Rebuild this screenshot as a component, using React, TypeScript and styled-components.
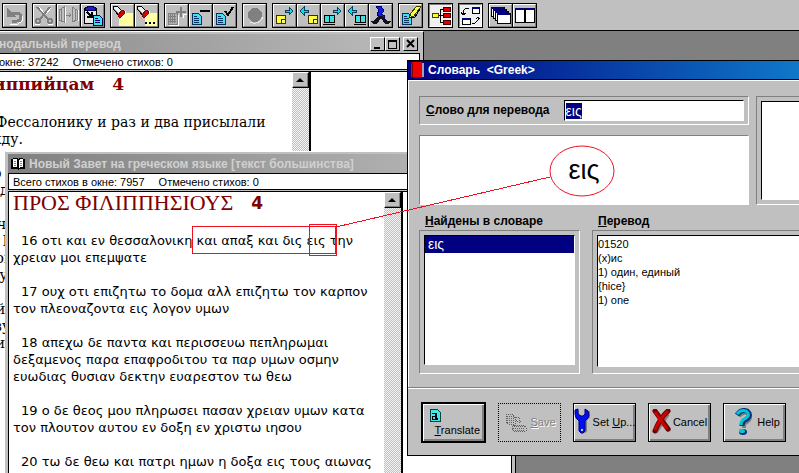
import React, { useEffect, useRef } from "react";
import styled, { createGlobalStyle, css } from "styled-components";

const sans = '"Liberation Sans", Arial, sans-serif';
const greekSans = '"DejaVu Sans", sans-serif';
const greekSerif = '"Liberation Serif", "Times New Roman", serif';
const slab = '"DejaVu Serif", serif';
const face = "#c0c0c0";
const shade = "#808080";

const GlobalStyle = createGlobalStyle`
  *, *::before, *::after { box-sizing: border-box; }
  body { margin: 0; background: ${shade}; font: 12px ${sans}; color: #000; }
  button, input, select, textarea { font: inherit; color: inherit; border-radius: 0; }
`;

const sunken = css`
  border: 1px solid;
  border-color: ${shade} #fff #fff ${shade};
`;

const Screen = styled.div`
  display: flex;
  flex-direction: column;
  height: 100vh;
  overflow: hidden;
  position: relative;
`;

const Toolbar = styled.div`
  display: flex;
  flex: none;
  gap: 5px;
  padding: 3px 2px 2px;
  background: ${face};
  border-bottom: 1px solid #000;
`;
const ToolGroup = styled.div`
  display: flex;
  border: 1px solid #000;
  gap: 1px;
  background: #000;
`;
const ToolButton = styled.button<{ $on?: boolean }>`
  display: block;
  width: 23px;
  height: 23px;
  padding: 0;
  border: 1px solid;
  border-color: ${(p) => (p.$on ? `${shade} #fff #fff ${shade}` : `#fff ${shade} ${shade} #fff`)};
  background: ${(p) => (p.$on ? "#f0f0f0" : face)};
  svg { display: block; }
`;

const Workspace = styled.main`
  flex: 1;
  position: relative;
  overflow: hidden;
`;

const BibleWindow = styled.section<{ $left: number; $top: number; $width: number }>`
  position: absolute;
  left: ${(p) => p.$left}px;
  top: ${(p) => p.$top}px;
  bottom: -40px;
  width: ${(p) => p.$width}px;
  display: flex;
  flex-direction: column;
  padding: 2px 3px 0 2px;
  background: ${face};
  border: 1px solid;
  border-color: #fff #000 #000 ${face};
`;
const TitleBar = styled.header<{ $inset?: number }>`
  display: flex;
  align-items: center;
  flex: none;
  height: 19px;
  gap: 3px;
  padding: 0 2px 0 ${(p) => p.$inset ?? 2}px;
  color: #d0d0d0;
  background: linear-gradient(90deg, #808080, #bcbcbc);
  h2 {
    flex: 1;
    margin: 0;
    font: bold 12px ${sans};
    white-space: nowrap;
  }
`;
const CaptionButtons = styled.div`
  display: flex;
  button:last-child { margin-left: 3px; }
`;
const CaptionButton = styled.button`
  width: 15px;
  height: 14px;
  padding: 0;
  background: ${face};
  border: 1px solid;
  border-color: #fff #000 #000 #fff;
  svg { display: block; }
`;
const Status = styled.div<{ $inset?: number }>`
  display: flex;
  align-items: center;
  flex: none;
  gap: 14px;
  height: 17px;
  padding-left: ${(p) => p.$inset ?? 4}px;
  margin-bottom: 1px;
  background: #fff;
  border: 1px solid #000;
  font-size: 11px;
  white-space: nowrap;
`;
const Panes = styled.div`
  display: flex;
  flex: 1;
  min-height: 0;
  border: solid #000;
  border-width: 1px 1px 0;
  background: #000;
  gap: 1px;
`;
const TextPane = styled.article<{ $width: number }>`
  flex: none;
  display: flex;
  width: ${(p) => p.$width}px;
  background: #fff;
  border-right: 1px solid #000;
  overflow: hidden;
`;
const SidePane = styled.div`
  flex: 1;
  margin-left: 1px;
  background: #fff;
  box-shadow: -1px 0 #fff;
`;
const ScrollTrack = styled.div`
  flex: none;
  width: 17px;
  background: repeating-conic-gradient(#c0c0c0 0 25%, #f4f4f4 0 50%) 0 0 / 2px 2px;
`;
const ScrollButton = styled.button`
  display: block;
  width: 17px;
  height: 16px;
  padding: 0;
  background: ${face};
  border: 1px solid;
  border-color: #fff #000 #000 #fff;
  box-shadow: inset -1px -1px ${shade};
  svg { display: block; }
`;
const Verses = styled.div<{ $font: string; $size: number; $inset: number }>`
  flex: 1;
  min-width: 0;
  padding-left: ${(p) => p.$inset}px;
  font: ${(p) => p.$size}px/17px ${(p) => p.$font};
  white-space: nowrap;
  p { margin: 0 0 17px; text-indent: 8px; }
`;
const BookHeading = styled.h3<{ $size: number; $height: number; $font: string; $indent?: number; $bold?: boolean }>`
  display: flex;
  gap: 18px;
  margin: 0 0 18px;
  padding-left: ${(p) => p.$indent ?? 0}px;
  color: #800000;
  font: ${(p) => (p.$bold ? "bold" : "normal")} ${(p) => p.$size}px/${(p) => p.$height}px ${(p) => p.$font};
`;
const Chapter = styled.span`
  font-family: "DejaVu Sans", sans-serif;
  font-size: 17px;
  font-weight: bold;
`;

const Dialog = styled.form`
  position: absolute;
  left: 407px;
  right: -40px;
  top: 29px;
  display: flex;
  flex-direction: column;
  background: ${face};
  border: 1px solid #000;
`;
const DialogTitle = styled.header`
  display: flex;
  align-items: center;
  gap: 4px;
  height: 19px;
  padding-left: 3px;
  color: #fff;
  background: linear-gradient(90deg, #000080, #1084d0);
  border-bottom: 1px solid #000;
  h2 { margin: 0; font: bold 12px ${sans}; white-space: pre; }
`;
const DialogBody = styled.div`
  display: flex;
  flex-direction: column;
  padding: 15px 11px 14px 10px;
  border: solid #fff;
  border-width: 1px 0 0 1px;
`;
const Upper = styled.div`
  display: flex;
  gap: 7px;
`;
const Lookup = styled.div`
  flex: none;
  width: 330px;
  display: flex;
  flex-direction: column;
  gap: 10px;
`;
const WordBox = styled.div`
  ${sunken}
  display: flex;
  align-items: center;
  gap: 14px;
  height: 29px;
  padding: 0 4px 0 6px;
`;
const FieldLabel = styled.label`
  font: bold 12px/17px ${sans};
  white-space: nowrap;
  &::first-letter { text-decoration: underline; }
`;
const field = css`
  background: #fff;
  border: 1px solid;
  border-color: #000 #fff #fff #000;
  outline: none;
`;
const WordInput = styled.input`
  ${field}
  flex: 1;
  min-width: 0;
  height: 21px;
  padding: 0 1px;
  font: 14px ${sans};
  &::selection { background: #000080; color: #fff; }
`;
const Preview = styled.output`
  ${sunken}
  display: flex;
  align-items: center;
  justify-content: center;
  height: 70px;
  background: #fff;
  font: 27px/40px ${sans};
`;
const Well = styled.div`
  ${sunken}
  display: flex;
  flex: 1;
  min-width: 0;
  padding: 4px;
`;
const Notes = styled.textarea`
  ${field}
  display: block;
  flex: 1;
  min-width: 0;
  padding: 1px 0;
  resize: none;
  overflow: hidden;
  font: 11px/14px ${sans};
`;
const Results = styled.div`
  display: flex;
  gap: 12px;
  margin-top: 8px;
`;
const ResultColumn = styled.div<{ $width?: number }>`
  flex: ${(p) => (p.$width ? "none" : 1)};
  width: ${(p) => (p.$width ? `${p.$width}px` : "auto")};
  display: flex;
  flex-direction: column;
  label { padding-left: 6px; }
`;
const ResultWell = styled(Well)<{ $foot: number }>`
  flex: none;
  height: 144px;
  padding-bottom: ${(p) => p.$foot}px;
`;
const WordList = styled.select`
  ${field}
  flex: 1;
  min-width: 0;
  padding: 0;
  overflow: hidden;
  font: 14px/17px ${sans};
  option { min-height: 17px; padding: 0 3px; color: #000; }
  option:checked { color: #fff; background: linear-gradient(#000080, #000080); }
`;
const Actions = styled.footer`
  display: flex;
  align-items: center;
  gap: 12px;
  height: 67px;
  padding: 0 13px;
  border-top: 1px solid #fff;
  box-shadow: 0 -1px ${shade};
`;
const ActionButton = styled.button<{ $primary?: boolean; $stacked?: boolean }>`
  display: flex;
  flex: none;
  flex-direction: ${(p) => (p.$stacked ? "column" : "row")};
  align-items: ${(p) => (p.$stacked ? "flex-start" : "center")};
  justify-content: center;
  gap: 2px;
  width: ${(p) => (p.$primary ? 65 : 63)}px;
  height: ${(p) => (p.$primary ? 41 : 39)}px;
  padding: 0 4px;
  background: ${face};
  border: ${(p) => (p.$primary ? 2 : 1)}px solid #000;
  box-shadow: inset 1px 1px #fff, inset -2px -2px ${shade};
  font-size: 11px;
  white-space: nowrap;
  svg { flex: none; display: block; }
  &:disabled {
    color: ${shade};
    border: 1px dotted #000;
    box-shadow: none;
    text-shadow: 1px 1px #fff;
  }
`;
const ActionText = styled.span<{ $push?: boolean }>`
  align-self: ${(p) => (p.$push ? "flex-end" : "center")};
`;
const Annotation = styled.svg`
  position: absolute;
  left: 0;
  top: 0;
  pointer-events: none;
`;

/* ---- toolbar drawings, 21x21 ---- */
const Page = ({ x, y, fill = "#40e0f0" }: { x: number; y: number; fill?: string }) => (
  <g>
    <path d={`M${x} ${y}h6l3 3v8h-9z`} fill={fill} stroke="#003060" />
    <path d={`M${x + 2} ${y + 3}h3M${x + 2} ${y + 5}h5M${x + 2} ${y + 7}h5M${x + 2} ${y + 9}h5`} stroke="#003060" />
  </g>
);
const Arrow = ({ x, y, flip }: { x: number; y: number; flip?: boolean }) => (
  <path
    d={flip ? `M${x} ${y + 3}l4-4v3h4v2h-4v3z` : `M${x + 8} ${y + 3}l-4-4v3h-4v2h4v3z`}
    fill="#00e0e8"
    stroke="#004060"
  />
);
const Note = ({ x, y }: { x: number; y: number }) => (
  <g>
    <path d={`M${x} ${y}h9v8h-9z`} fill="#ffff40" stroke="#403000" />
    <path d={`M${x + 5} ${y + 8}v-4h4`} fill="#fff" stroke="#403000" />
  </g>
);
const Book = ({ x, y }: { x: number; y: number }) => (
  <g>
    <path d={`M${x} ${y}h4l1 1 1-1h4v7h-4l-1 1-1-1h-4z`} fill="#40e0e0" stroke="#000" />
    <path d={`M${x + 5} ${y + 1}v7M${x - 1} ${y + 9}h12`} stroke="#000" />
  </g>
);
const Torch = () => (
  <g>
    <path d="M1 1h4l6 6-4 4-6-8z" fill="#f0f0f0" stroke="#000" />
    <path d="M2 4l6 6" stroke="#808080" />
    <path d="M6 10l4-5 2 1v3l-3 3h-2z" fill="#e00000" stroke="#800000" />
    <path d="M13 6v4l-4 3" stroke="#fff" fill="none" />
  </g>
);
const Card = ({ x, y, w, h }: { x: number; y: number; w: number; h: number }) => (
  <g>
    <path d={`M${x} ${y}h${w}v${h}h-${w}z`} fill="#fff" stroke="#000" />
    <path d={`M${x} ${y + 1}h${w}`} stroke="#000080" strokeWidth="2" />
  </g>
);

const icons: Record<string, React.ReactNode> = {
  undo: (
    <g fill="none">
      <path d="M6 19h8l4-3v-5" stroke="#fff" />
      <path d="M6 8h7q4 0 4 4t-4 4h-5" stroke="#808080" strokeWidth="3" />
      <path d="M3 3v9h9z" fill="#808080" />
    </g>
  ),
  cut: (
    <g fill="none" stroke="#808080" strokeWidth="2">
      <path d="M3 2l11 12M16 2L6 14" />
      <circle cx="4" cy="16" r="2" />
      <circle cx="16" cy="16" r="2" />
      <path d="M5 2l5 6M17 3l-5 6M1 19h5M14 19h5" stroke="#fff" strokeWidth="1" />
    </g>
  ),
  mirror: (
    <g stroke="#808080" fill="none">
      <path d="M1 5l5-3v15l-5-2zM19 5l-5-3v15l5-2zM3 4v12M17 4v12" />
      <path d="M7 10h6M11 8l2 2-2 2" />
      <path d="M7 2v16M20 5v11" stroke="#fff" />
    </g>
  ),
  paste: (
    <g>
      <path d="M2 3h12v15H2z" fill="#e8e8e8" stroke="#000" />
      <path d="M5 1h6v1h2v3H3V2h2z" fill="#2020b0" stroke="#000060" />
      <path d="M5 7l4 4M10 7v5H5" stroke="#000" strokeWidth="2" fill="none" />
      <path d="M11 10h6l3 3v7h-9z" fill="#40e0f0" stroke="#000060" />
      <path d="M13 13h3M13 15h5M13 17h5" stroke="#000060" />
    </g>
  ),
  torch: (
    <g>
      <path d="M11 8h10v13H7v-6z" fill="#ffffa0" />
      <Torch />
    </g>
  ),
  torchMore: (
    <g>
      <path d="M12 8h9v13H9v-8z" fill="#ffffa0" />
      <Torch />
      <path d="M9 17h2v2H9zM13 17h2v2h-2zM17 17h2v2h-2z" />
    </g>
  ),
  add: (
    <g>
      <path d="M2 8h9v11H2z" fill="#b0b0b0" stroke="#808080" />
      <path d="M4 9v9M6 9v9M8 9v9M3 11h7M3 14h7M3 16h7" stroke="#808080" />
      <path d="M15 2v10M10 7h10" stroke="#808080" strokeWidth="2" />
      <path d="M12 10v10H3M17 9v4M17 9h4" stroke="#fff" fill="none" />
    </g>
  ),
  remove: (
    <g>
      <Page x={2} y={8} />
      <path d="M10 6h10" stroke="#000" strokeWidth="2" />
    </g>
  ),
  check: (
    <g>
      <Page x={2} y={8} />
      <path d="M11 6l3 4 5-8" stroke="#000" strokeWidth="2" fill="none" />
    </g>
  ),
  record: (
    <g>
      <circle cx="11" cy="10" r="7" fill="#808080" />
      <path d="M6 17q8 4 13-5" fill="none" stroke="#e8e8e8" />
    </g>
  ),
  noteNext: (<g><Arrow x={11} y={3} /><Note x={2} y={10} /></g>),
  notePrev: (<g><Arrow x={2} y={3} flip /><Note x={10} y={10} /></g>),
  bookNext: (<g><Arrow x={11} y={3} /><Book x={2} y={10} /></g>),
  bookPrev: (<g><Arrow x={2} y={3} flip /><Book x={9} y={10} /></g>),
  runner: (
    <g>
      <path d="M6 1h5l3 5-3 3 4 2-2 3-4-2-2-3 2-3z" fill="#1020e0" stroke="#000080" />
      <path d="M8 11l-5 5H1l2 3h4l4-6 4 6h4l2-3-4 0-4-5z" fill="#101020" />
    </g>
  ),
  edit: (
    <g>
      <Page x={2} y={8} />
      <path d="M17 1h3v2l-6 8-5 2 2-5z" fill="#ffff40" stroke="#404000" />
      <path d="M9 13l6-1 5-8" stroke="#000" fill="none" />
    </g>
  ),
  tree: (
    <g>
      <path d="M9 10h4M10 4v13M10 4h3M10 17h3" stroke="#000" fill="none" />
      <path d="M2 8h6v4H2z" fill="#ffff20" stroke="#404000" />
      <path d="M13 2h7v4h-7zM13 8h7v4h-7zM13 15h7v4h-7z" fill="#e00000" stroke="#400000" />
    </g>
  ),
  swap: (
    <g>
      <Card x={12} y={2} w={7} h={6} />
      <Card x={2} y={13} w={8} h={6} />
      <path d="M9 3H6L3 6v3M1 7l2 3 3-2M12 18h3l3-3v-2M16 14l2-2 2 2" stroke="#000" fill="none" />
    </g>
  ),
  cascade: (
    <g>
      <Card x={1} y={2} w={13} h={9} />
      <Card x={3} y={4} w={13} h={9} />
      <Card x={5} y={6} w={13} h={9} />
      <Card x={7} y={8} w={13} h={10} />
    </g>
  ),
  tile: (<g><Card x={1} y={3} w={9} h={14} /><Card x={11} y={3} w={9} h={14} /></g>),
};

const groups: { id: string; label: string; on?: boolean }[][] = [
  [{ id: "undo", label: "Undo" }],
  [{ id: "cut", label: "Cut" }, { id: "mirror", label: "Compare" }, { id: "paste", label: "Paste" }],
  [{ id: "torch", label: "Find" }, { id: "torchMore", label: "Find next" }],
  [{ id: "add", label: "Add" }, { id: "remove", label: "Remove" }, { id: "check", label: "Mark" }],
  [{ id: "record", label: "Record" }],
  [
    { id: "noteNext", label: "Next note" },
    { id: "notePrev", label: "Previous note" },
    { id: "bookNext", label: "Next book" },
    { id: "bookPrev", label: "Previous book" },
    { id: "runner", label: "Go to" },
  ],
  [{ id: "edit", label: "Edit" }],
  [{ id: "tree", label: "Tree", on: true }],
  [{ id: "swap", label: "Swap", on: true }],
  [{ id: "cascade", label: "Cascade" }, { id: "tile", label: "Tile" }],
];

const ScrollBar = () => (
  <ScrollTrack>
    <ScrollButton type="button" aria-label="Scroll up">
      <svg width="15" height="14"><path d="M3 9h8L7 5z" /></svg>
    </ScrollButton>
  </ScrollTrack>
);

const Lines = ({ rows }: { rows: string[] }) => (
  <p>
    {rows.map((row, i) => (
      <React.Fragment key={i}>
        {i > 0 && <br />}
        {row}
      </React.Fragment>
    ))}
  </p>
);

const russian = [
  ["16 вы и в Фессалонику и раз и два присылали", "мне на нужду."],
  ["17 Говорю это не потому, чтобы", "но ищу плода, умножающегося"],
  ["18 Я получил все, и избыточествую;", "получив от Епафродита", "как благовонное курение,", "благоугодную Богу."],
  ["19 Бог мой да восполнит", "по богатству Своему в славе,", "Христом Иисусом."],
];
const greekVerses = [
  ["16 οτι και εν θεσσαλονικη και απαξ και δις εις την", "χρειαν μοι επεμψατε"],
  ["17 ουχ οτι επιζητω το δομα αλλ επιζητω τον καρπον", "τον πλεοναζοντα εις λογον υμων"],
  ["18 απεχω δε παντα και περισσευω πεπληρωμαι", "δεξαμενος παρα επαφροδιτου τα παρ υμων οσμην", "ευωδιας θυσιαν δεκτην ευαρεστον τω θεω"],
  ["19 ο δε θεος μου πληρωσει πασαν χρειαν υμων κατα", "τον πλουτον αυτου εν δοξη εν χριστω ιησου"],
  ["20 τω δε θεω και πατρι ημων η δοξα εις τους αιωνας"],
];

export default function App() {
  const word = useRef<HTMLInputElement>(null);
  useEffect(() => {
    word.current?.focus();
    word.current?.select();
  }, []);

  return (
    <Screen>
      <GlobalStyle />
      <Toolbar role="toolbar">
        {groups.map((group) => (
          <ToolGroup key={group[0].id}>
            {group.map((tool) => (
              <ToolButton key={tool.id} type="button" aria-label={tool.label} $on={tool.on}>
                <svg width="21" height="21" shapeRendering="crispEdges">{icons[tool.id]}</svg>
              </ToolButton>
            ))}
          </ToolGroup>
        ))}
      </Toolbar>

      <Workspace>
        <BibleWindow $left={-100} $top={0} $width={524}>
          <TitleBar $inset={80}>
            <h2>Синодальный перевод</h2>
            <CaptionButtons>
              <CaptionButton type="button" aria-label="Minimize">
                <svg width="13" height="12"><path d="M3 9h6v2H3z" /></svg>
              </CaptionButton>
              <CaptionButton type="button" aria-label="Maximize">
                <svg width="13" height="12" shapeRendering="crispEdges"><path d="M2 2h9v9H2zm1 2v6h7V4z" fillRule="evenodd" /></svg>
              </CaptionButton>
              <CaptionButton type="button" aria-label="Close">
                <svg width="13" height="12"><path d="M3 2l7 7M10 2L3 9" stroke="#000" strokeWidth="2" /></svg>
              </CaptionButton>
            </CaptionButtons>
          </TitleBar>
          <Status $inset={17}>
            <span>Всего стихов в окне: 37242</span>
            <span>Отмечено стихов: 0</span>
          </Status>
          <Panes>
            <TextPane $width={406}>
              <Verses $font={slab} $size={14} $inset={12}>
                <BookHeading $font={slab} $size={17} $height={24} $indent={15} $bold>
                  <span>К Филиппийцам</span>
                  <span>4</span>
                </BookHeading>
                {russian.map((rows, i) => <Lines key={i} rows={rows} />)}
              </Verses>
              <ScrollBar />
            </TextPane>
            <SidePane />
          </Panes>
        </BibleWindow>

        <BibleWindow $left={5} $top={120} $width={511}>
          <TitleBar>
            <svg width="16" height="14" shapeRendering="crispEdges">
              <path d="M1 2h2v-1h4l1 1 1-1h4v1h2v10H9l-1 1-1-1H1z" fill="#000" />
              <path d="M3 2h3l1 1v8l-1-1H3zM13 2h-3l-1 1v8l1-1h3z" fill="#fff" />
              <path d="M4 4h2M4 6h2M10 4h2M10 6h2M4 8h2M10 8h2" stroke="#808080" />
            </svg>
            <h2>Новый Завет на греческом языке [текст большинства]</h2>
          </TitleBar>
          <Status>
            <span>Всего стихов в окне: 7957</span>
            <span>Отмечено стихов: 0</span>
          </Status>
          <Panes>
            <TextPane $width={393}>
              <Verses $font={greekSans} $size={13} $inset={4}>
                <BookHeading $font={greekSerif} $size={22} $height={22}>
                  <span>ΠΡΟΣ ΦΙΛΙΠΠΗΣΙΟΥΣ</span>
                  <Chapter>4</Chapter>
                </BookHeading>
                {greekVerses.map((rows, i) => <Lines key={i} rows={rows} />)}
              </Verses>
              <ScrollBar />
            </TextPane>
            <SidePane />
          </Panes>
        </BibleWindow>

        <Dialog onSubmit={(e) => e.preventDefault()}>
          <DialogTitle>
            <svg width="13" height="16" shapeRendering="crispEdges">
              <path d="M0 1l2-1h9v15H0z" fill="#f00000" />
              <path d="M11 1h2v14h-2z" fill="#a0a0c0" />
              <path d="M1 1v14h11" fill="none" stroke="#800000" />
            </svg>
            <h2>{"Словарь  <Greek>"}</h2>
          </DialogTitle>
          <DialogBody>
            <Upper>
              <Lookup>
                <WordBox>
                  <FieldLabel htmlFor="word">Слово для перевода</FieldLabel>
                  <WordInput ref={word} id="word" defaultValue="εις" />
                </WordBox>
                <Preview htmlFor="word">εις</Preview>
              </Lookup>
              <Well>
                <Notes readOnly aria-label="Notes" />
              </Well>
            </Upper>
            <Results>
              <ResultColumn $width={161}>
                <FieldLabel htmlFor="found">Найдены в словаре</FieldLabel>
                <ResultWell $foot={8}>
                  <WordList id="found" size={7} defaultValue="εις">
                    <option value="εις">εις</option>
                  </WordList>
                </ResultWell>
              </ResultColumn>
              <ResultColumn>
                <FieldLabel htmlFor="translation">Перевод</FieldLabel>
                <ResultWell $foot={6}>
                  <Notes id="translation" readOnly defaultValue={"01520\n(х)ис\n1) один, единый\n{hice}\n1) one"} />
                </ResultWell>
              </ResultColumn>
            </Results>
          </DialogBody>
          <Actions>
            <ActionButton $primary $stacked>
              <svg width="15" height="14" shapeRendering="crispEdges">
                <path d="M3 1h7l3 3v9H3z" fill="#40e8e8" stroke="#004040" />
                <path d="M5 5h4v6H5V8h4" fill="none" stroke="#000" strokeWidth="1" />
                <path d="M9 5v6h2" fill="none" stroke="#000" strokeWidth="2" />
              </svg>
              <ActionText $push><u>T</u>ranslate</ActionText>
            </ActionButton>
            <ActionButton type="button" disabled>
              <svg width="25" height="24" shapeRendering="crispEdges" fill="none" stroke="#606060" strokeDasharray="1 1">
                <path d="M3 4h6l3 3v7H5l-2-3zM4 6h8M4 8h8M4 10h8M4 12h8M11 7h5v5M13 10l3 3 3-3" />
                <path d="M9 17l3-2h9l2 2v4H10zM10 18h12M10 20h12M11 16h11" />
              </svg>
              <ActionText><u>S</u>ave</ActionText>
            </ActionButton>
            <ActionButton type="button">
              <svg width="17" height="28">
                <path d="M4 3v6l3 3v11q2 3 5 0V12l3-3V3" fill="none" stroke="#808080" strokeWidth="2" />
                <path d="M1 2l3-1v5l3 2h2l2-2V1l3 2 1 4-1 3-3 3v10l-2 2H7l-2-2V13l-3-3-1-4z" fill="#0010f0" stroke="#000080" />
                <circle cx="8" cy="22" r="1" fill="#fff" />
              </svg>
              <ActionText>Set <u>U</u>p...</ActionText>
            </ActionButton>
            <ActionButton type="button">
              <svg width="19" height="26">
                <path d="M4 4l14 18M16 5L4 23" stroke="#808080" strokeWidth="4" />
                <path d="M3 2l13 18M16 2Q8 9 3 22" fill="none" stroke="#700000" strokeWidth="5" strokeLinecap="round" />
                <path d="M3 3l12 17M16 2Q7 10 3 21" fill="none" stroke="#d00000" strokeWidth="3" />
              </svg>
              <ActionText>Cancel</ActionText>
            </ActionButton>
            <ActionButton type="button">
              <svg width="26" height="28" fill="none">
                <path d="M10 8q8-7 11 0 1 4-6 8v4" stroke="#808080" strokeWidth="4" />
                <path d="M8 7q4-6 10-4 5 4 0 8-5 2-5 7" stroke="#003080" strokeWidth="5" />
                <path d="M8 6q4-5 9-3 5 4 0 7-5 2-5 7" stroke="#00c8d0" strokeWidth="3" />
                <ellipse cx="14" cy="24" rx="4" ry="3" fill="#003080" />
                <ellipse cx="13" cy="23" rx="3" ry="2" fill="#00c8d0" />
              </svg>
              <ActionText>Help</ActionText>
            </ActionButton>
          </Actions>
        </Dialog>
      </Workspace>

      <Annotation width="799" height="473" fill="none" stroke="#f01020" aria-hidden="true">
        <g shapeRendering="crispEdges">
          <path d="M192 226h143v27h-143zM309 224h27v31h-27z" />
          <path d="M336 227L550 177" />
        </g>
        <ellipse cx="582" cy="171" rx="32" ry="25" />
      </Annotation>
    </Screen>
  );
}
